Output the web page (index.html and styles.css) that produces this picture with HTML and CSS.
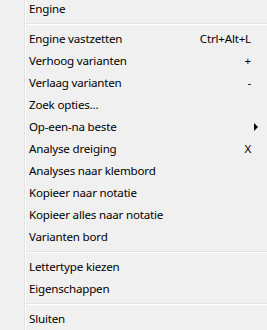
FILE: index.html
```html
<!DOCTYPE html>
<html lang="nl">
<head>
  <meta charset="UTF-8">
  <title>Engine menu</title>
  <link rel="stylesheet" href="styles.css">
</head>
<body>
  <div class="menu">
    <div class="item"><span class="label">Engine</span></div>
    <div class="sep"></div>
    <div class="item"><span class="label">Engine vastzetten</span><span class="key">Ctrl+Alt+L</span></div>
    <div class="item"><span class="label">Verhoog varianten</span><span class="key">+</span></div>
    <div class="item"><span class="label">Verlaag varianten</span><span class="key">-</span></div>
    <div class="item"><span class="label">Zoek opties...</span></div>
    <div class="item"><span class="label">Op-een-na beste</span><span class="arrow"></span></div>
    <div class="item"><span class="label">Analyse dreiging</span><span class="key">X</span></div>
    <div class="item"><span class="label">Analyses naar klembord</span></div>
    <div class="item"><span class="label">Kopieer naar notatie</span></div>
    <div class="item"><span class="label">Kopieer alles naar notatie</span></div>
    <div class="item"><span class="label">Varianten bord</span></div>
    <div class="sep"></div>
    <div class="item"><span class="label">Lettertype kiezen</span></div>
    <div class="item"><span class="label">Eigenschappen</span></div>
    <div class="sep"></div>
    <div class="item"><span class="label">Sluiten</span></div>
  </div>
</body>
</html>
```
FILE: styles.css
```css
html, body {
  margin: 0;
  height: 100%;
  overflow: hidden;
}
body {
  background: #f0f0f0;
  font-family: "Noto Sans", "DejaVu Sans", sans-serif;
  font-size: 11.6px;
  letter-spacing: -0.2px;
  color: #000;
}
.menu {
  margin-top: -3px;
  min-height: 340px;
  background: linear-gradient(to right, #f0f0f0 24px, #e2e3e3 24px, #e2e3e3 25px, #fff 25px, #fff 26px, #f0f0f0 26px);
}
.item {
  height: 22px;
  display: flex;
  align-items: center;
  padding-left: 29px;
  padding-right: 16px;
  position: relative;
}
.label {
  flex: 1;
  white-space: nowrap;
}
.key {
  white-space: nowrap;
}
.arrow {
  position: absolute;
  right: 9px;
  top: 8px;
  width: 0;
  height: 0;
  border-top: 4px solid transparent;
  border-bottom: 4px solid transparent;
  border-left: 4px solid #000;
}
.sep {
  height: 8px;
  margin-left: 26px;
  display: flex;
  flex-direction: column;
  justify-content: center;
}
.sep::before {
  content: "";
  display: block;
  margin-top: 2px;
  height: 1px;
  background: #e2e3e3;
  border-bottom: 1px solid #fff;
}
```
